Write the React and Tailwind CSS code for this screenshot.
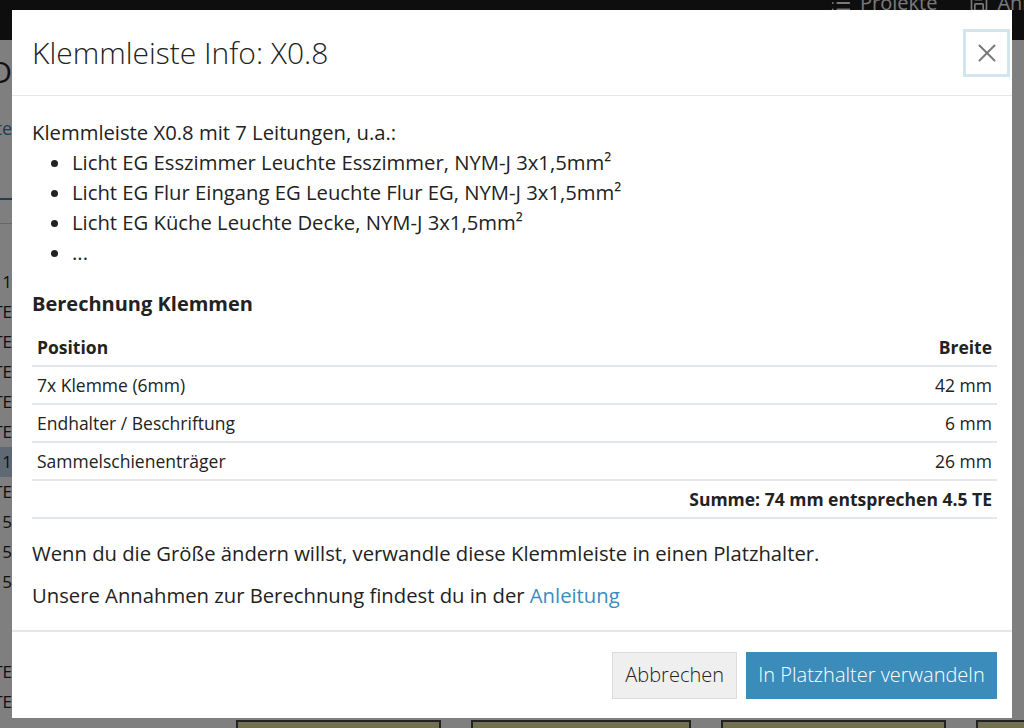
import React from "react";
import { List, Save, X } from "lucide-react";

const font = { fontFamily: '"Open Sans", "Noto Sans", sans-serif' };

const leitungen = [
  "Licht EG Esszimmer Leuchte Esszimmer, NYM-J 3x1,5mm²",
  "Licht EG Flur Eingang EG Leuchte Flur EG, NYM-J 3x1,5mm²",
  "Licht EG Küche Leuchte Decke, NYM-J 3x1,5mm²",
  "...",
];

const positionen = [
  { name: "7x Klemme (6mm)", breite: "42 mm" },
  { name: "Endhalter / Beschriftung", breite: "6 mm" },
  { name: "Sammelschienenträger", breite: "26 mm" },
];

// right ends of the sidebar rows, the rest sits under the dialog
const reihen = ["1", "TE", "TE", "TE", "TE", "TE", "1", "TE", "5", "5", "5", "", "", "TE", "TE"];

// page behind the dialog: nav bar, sidebar list, rack drawing
const Page = () => (
  <div className="w-[1024px] h-[728px] bg-white overflow-hidden flex flex-col">
    <header className="h-[40px] bg-[#1c1c1c] flex items-start pl-[830px] gap-[32px] text-[#f2f2f2] text-[20px] whitespace-nowrap">
      <span className="flex items-center gap-2 -mt-[12px]">
        <List size={22} /> Projekte
      </span>
      <span className="flex items-center gap-2 -mt-[12px]">
        <Save size={20} /> Anleitung
      </span>
    </header>
    <div className="flex flex-1">
      <aside className="w-[12px] flex flex-col">
        <div className="h-[62px] flex items-center justify-end text-[30px] text-[#222]">D</div>
        <div className="h-[52px] flex items-center justify-end text-[18px] text-[#3a7fa8]">te</div>
        <div className="h-[46px] border-b-2 border-[#3a7fa8] w-[30px]"></div>
        <div className="h-[24px] border-b border-[#ccc] w-[30px]"></div>
        <div className="flex flex-col pt-[43px]">
          {reihen.map((r, i) => (
            <div
              key={i}
              className={`h-[30px] flex items-center justify-end text-[17px] text-[#222] ${i === 6 ? "bg-[#bcd3e6]" : ""}`}
            >
              {r}
            </div>
          ))}
        </div>
      </aside>
      <main className="flex-1 flex flex-col justify-end">
        <div className="flex gap-[30px] pl-[224px] h-[14px] translate-y-[6px]">
          <div className="w-[205px] border-2 border-[#444] bg-[#e6e0a4]"></div>
          <div className="w-[220px] border-2 border-[#444] bg-[#e6e0a4]"></div>
          <div className="w-[225px] border-2 border-[#444] bg-[#e6e0a4]"></div>
          <div className="w-[220px] border-2 border-[#444] bg-[#e6e0a4]"></div>
        </div>
      </main>
    </div>
  </div>
);

const Dialog = () => (
  <div className="absolute left-[12px] top-[10px] w-[1000px] h-[708px] bg-white flex flex-col text-[#222]">
    {/* header */}
    <div className="h-[86px] flex items-center justify-between pl-[20px] pr-[2px] border-b border-[#e3e6ea]">
      <h1 className="text-[30px] font-light text-[#222]">Klemmleiste Info: X0.8</h1>
      <button className="w-[47px] h-[48px] border-[3px] border-[#d3e6f0] flex items-center justify-center text-[#7a7a7a]">
        <X size={30} strokeWidth={1.6} />
      </button>
    </div>

    {/* body */}
    <div className="flex-1 pl-[20px] pr-[15px] pt-[21px] text-[20.25px] leading-[30px]">
      <p>Klemmleiste X0.8 mit 7 Leitungen, u.a.:</p>
      <ul className="list-disc pl-[40px]">
        {leitungen.map((l) => (
          <li key={l}>{l}</li>
        ))}
      </ul>

      <h2 className="text-[20px] font-bold mt-[22px] mb-[9px]">Berechnung Klemmen</h2>

      <table className="w-full text-[17.5px]">
        <thead>
          <tr className="h-[38px] border-b-2 border-[#e3e7ec]">
            <th className="text-left font-bold px-[5px]">Position</th>
            <th className="text-right font-bold px-[5px]">Breite</th>
          </tr>
        </thead>
        <tbody>
          {positionen.map((p) => (
            <tr key={p.name} className="h-[38px] border-b-2 border-[#e3e7ec]">
              <td className="px-[5px]">{p.name}</td>
              <td className="px-[5px] text-right">{p.breite}</td>
            </tr>
          ))}
          <tr className="h-[38px] border-b-2 border-[#e3e7ec]">
            <td></td>
            <td className="px-[5px] text-right font-bold whitespace-nowrap">
              Summe: 74 mm entsprechen 4.5 TE
            </td>
          </tr>
        </tbody>
      </table>

      <p className="mt-[19px]">Wenn du die Größe ändern willst, verwandle diese Klemmleiste in einen Platzhalter.</p>
      <p className="mt-[12px]">
        Unsere Annahmen zur Berechnung findest du in der <a className="text-[#3a8bbf]">Anleitung</a>
      </p>
    </div>

    {/* footer */}
    <div className="h-[88px] border-t-2 border-[#e3e6ea] flex items-center justify-end gap-[9px] pr-[15px]">
      <button className="h-[47px] px-[12px] bg-[#efefef] border border-[#dcdcdc] text-[20px] font-light text-[#222]">
        Abbrechen
      </button>
      <button className="h-[47px] w-[251px] bg-[#3b8cbb] text-[20px] font-light text-white">
        In Platzhalter verwandeln
      </button>
    </div>
  </div>
);

export default function App() {
  return (
    <div className="relative w-[1024px] h-[728px] overflow-hidden" style={font}>
      <Page />
      <div className="absolute inset-0 bg-black/50"></div>
      <Dialog />
    </div>
  );
}
